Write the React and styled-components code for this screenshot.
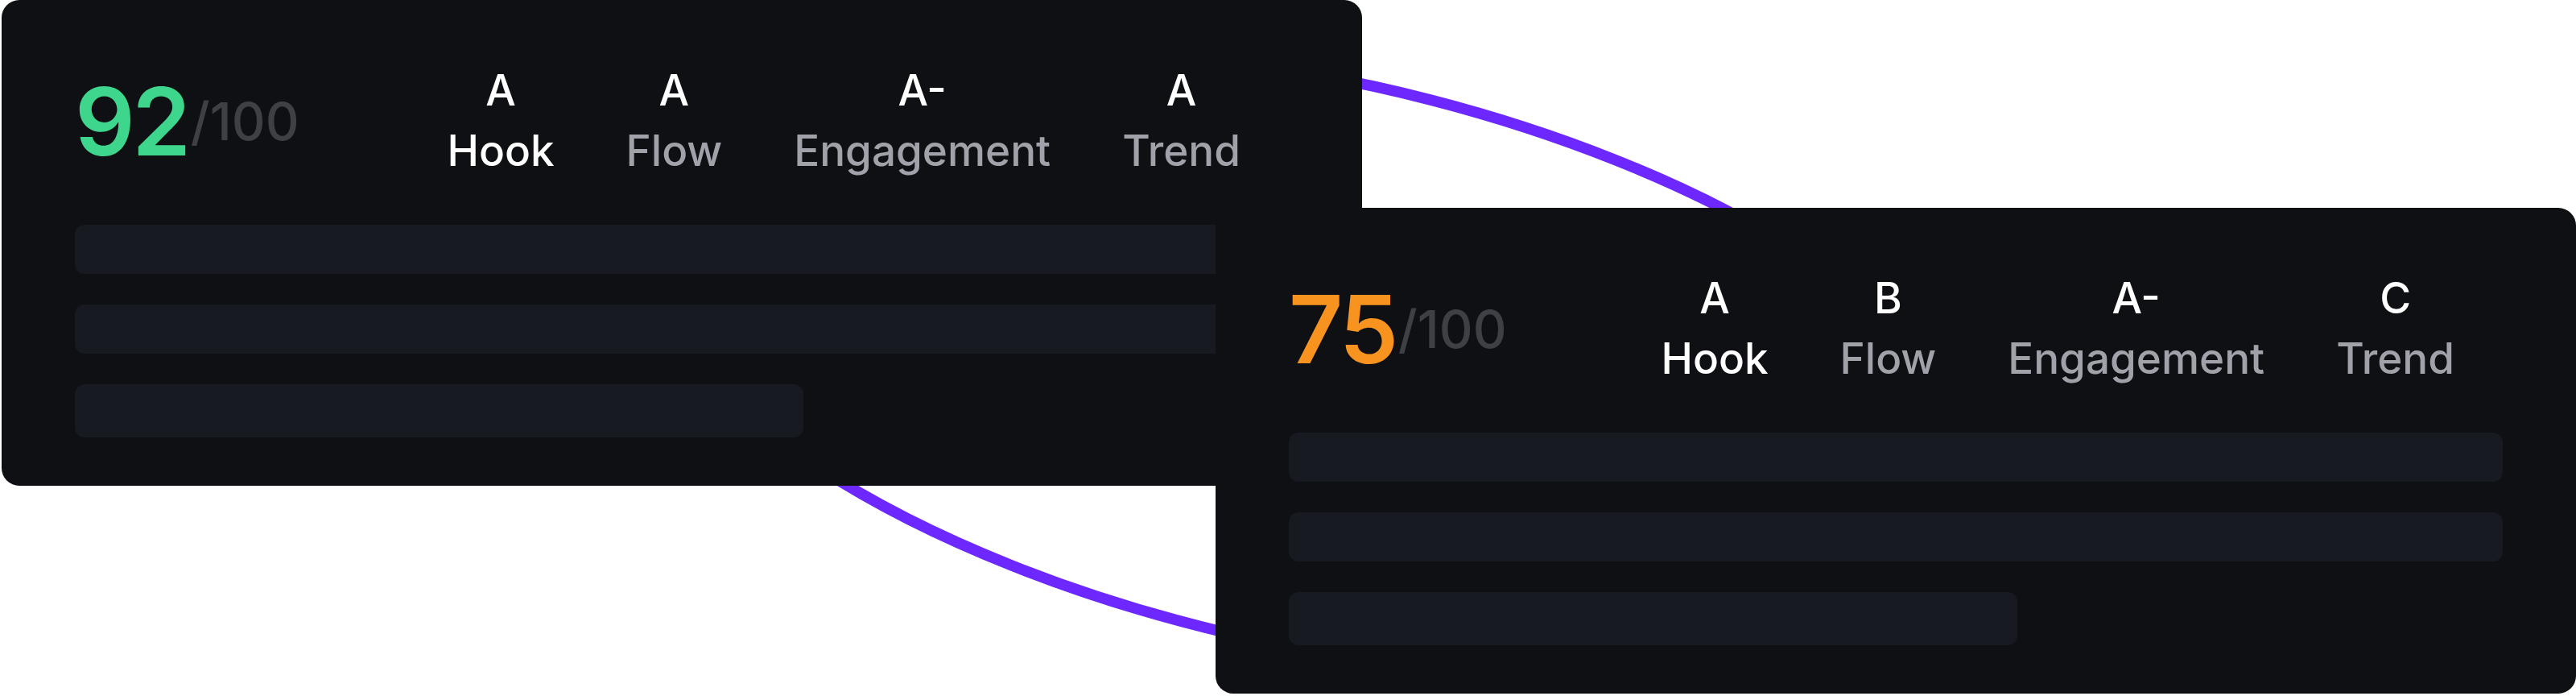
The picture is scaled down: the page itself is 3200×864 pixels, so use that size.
import React from "react";
import styled, { createGlobalStyle } from "styled-components";

const GlobalStyle = createGlobalStyle`
  html, body {
    margin: 0;
    padding: 0;
    background: #ffffff;
    overflow: hidden;
  }
  body {
    font-family: Inter, "Noto Sans", sans-serif;
  }
`;

const Stage = styled.div`
  position: relative;
  width: 3200px;
  height: 864px;
  display: flex;
  align-items: flex-start;
  padding-left: 2px;
  box-sizing: border-box;
`;

const Orbit = styled.svg`
  position: absolute;
  inset: 0;
  width: 100%;
  height: 100%;
  z-index: 0;
`;

const Card = styled.div`
  position: relative;
  z-index: 1;
  flex: none;
  width: 1690px;
  box-sizing: border-box;
  padding: 75px 91px 60px;
  background: #0f1014;
  border-radius: 22px;
  margin-top: ${(p) => p.$top || 0}px;
  margin-left: ${(p) => p.$shift || 0}px;
`;

const Header = styled.div`
  display: flex;
  align-items: center;
  justify-content: space-between;
  height: 150px;
`;

const Score = styled.div`
  display: flex;
  align-items: center;
`;

const Value = styled.span`
  font-size: 117px;
  line-height: 1;
  font-weight: 600;
  letter-spacing: -0.03em;
  color: ${(p) => p.$color};
`;

const Max = styled.span`
  font-size: 65px;
  line-height: 1;
  font-weight: 500;
  margin-left: 3px;
  color: #3f3f46;
`;

const Grades = styled.div`
  display: flex;
  gap: 89px;
  margin-right: 60px;
`;

const Grade = styled.div`
  display: flex;
  flex-direction: column;
  align-items: center;
  font-size: 53px;
  font-weight: 500;
  line-height: 75px;
`;

const Letter = styled.span`
  color: #ffffff;
`;

const Label = styled.span`
  color: ${(p) => (p.$active ? "#ffffff" : "#a1a1aa")};
`;

const Lines = styled.div`
  display: flex;
  flex-direction: column;
  gap: 38px;
  margin-top: 54px;
`;

const Line = styled.div`
  width: ${(p) => p.$w}%;
  height: ${(p) => p.$h}px;
  border-radius: 12px;
  background: #181a21;
`;

function ScoreCard({ score, color, grades, top, shift }) {
  return (
    <Card $top={top} $shift={shift}>
      <Header>
        <Score>
          <Value $color={color}>{score}</Value>
          <Max>/100</Max>
        </Score>
        <Grades>
          {grades.map((g, i) => (
            <Grade key={g.label}>
              <Letter>{g.grade}</Letter>
              <Label $active={i === 0}>{g.label}</Label>
            </Grade>
          ))}
        </Grades>
      </Header>
      <Lines>
        <Line $w={100} $h={61} />
        <Line $w={100} $h={61} />
        <Line $w={60} $h={66} />
      </Lines>
    </Card>
  );
}

const first = [
  { grade: "A", label: "Hook" },
  { grade: "A", label: "Flow" },
  { grade: "A-", label: "Engagement" },
  { grade: "A", label: "Trend" },
];

const second = [
  { grade: "A", label: "Hook" },
  { grade: "B", label: "Flow" },
  { grade: "A-", label: "Engagement" },
  { grade: "C", label: "Trend" },
];

export default function App() {
  return (
    <>
      <GlobalStyle />
      <Stage>
        <Orbit viewBox="0 0 3200 864">
          <ellipse
            cx="1631"
            cy="450"
            rx="849"
            ry="351"
            transform="rotate(12.42 1631 450)"
            fill="none"
            stroke="#6d28ff"
            strokeWidth="13.5"
          />
        </Orbit>
        <ScoreCard score="92" color="#3dd68c" grades={first} />
        <ScoreCard score="75" color="#f7931e" grades={second} top={258} shift={-182} />
      </Stage>
    </>
  );
}
